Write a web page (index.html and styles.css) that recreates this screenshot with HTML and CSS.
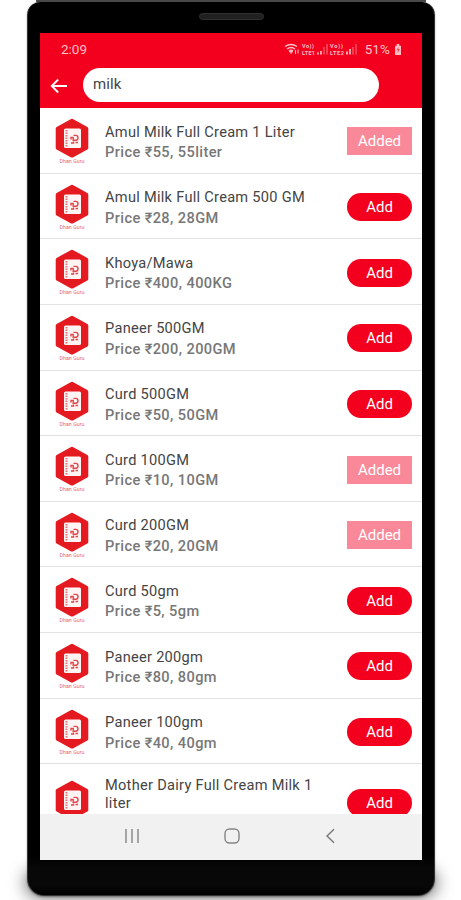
FILE: index.html
```html
<!DOCTYPE html>
<html lang="en">
<head>
<meta charset="utf-8">
<title>Product search</title>
<link rel="stylesheet" href="styles.css">
</head>
<body>
<svg class="defs" aria-hidden="true">
  <symbol id="logo" viewBox="0 0 36 50">
    <path d="M18 2.5 32.5 10.5V30L18 37.8 3.5 30V10.5Z" fill="#e41a20" stroke="#e41a20" stroke-width="3.6" stroke-linejoin="round"/>
    <rect x="10" y="10.5" width="17" height="19.5" rx="1.5" fill="#fff4f4"/>
    <path d="M12.5 12V29" stroke="#e87579" stroke-width="2" stroke-dasharray="1.5 1"/>
    <path d="M17 21.5v-2h2.2v2.7H22q2 0 2-2.4t-2.2-2.4H19.5M17 25h2.5v-1.5M21.5 24.5h2.5" fill="none" stroke="#e2464b" stroke-width="1.4"/>
    <text x="18" y="45.3" text-anchor="middle" font-size="5.3" textLength="25" fill="#e9666b">Dhan Guru</text>
  </symbol>
</svg>
<div class="phone">
  <div class="speaker"></div>
  <div class="screen">
    <header class="header">
      <div class="status">
        <span class="time">2:09</span>
        <svg class="signals" width="75" height="16" viewBox="0 0 75 16" fill="none" stroke="#ffc0c5">
          <path d="M1 5.5Q7 1.5 13 5.5M3 8Q7 5 11 8M5 10.3Q7 8.5 9 10.3" stroke-width="1.5"/>
          <path d="M7 12.5 5.5 10.5h3ZM11.5 9v4M14 8.5v4" stroke-width="1"/>
          <g fill="#ffc0c5" stroke="none" font-size="5.5" font-weight="700">
            <text x="18" y="7" textLength="12">Vo))</text><text x="18" y="13.6" textLength="13">LTE1</text>
            <text x="46" y="7" textLength="13">Vo))</text><text x="46" y="13.6" textLength="14">LTE2</text>
          </g>
          <path d="M34 13.5v-2M37 13.5V10M63 13.5v-3M66 13.5V8" stroke-width="1.7"/>
          <path d="M40 13.5V6M43 13.5V3M69 13.5V6M72 13.5V3" stroke="#f96873" stroke-width="1.2"/>
        </svg>
        <span class="battery">51%</span>
        <svg class="cell" width="8" height="11" viewBox="0 0 9 13"><path d="M3 0h3v2h2v11H1V2h2Z" fill="#ffc0c5"/><path d="M5 3.5 2.5 7.5h2L4 11l3-5H5Z" fill="#e85560"/></svg>
      </div>
      <div class="searchbar">
        <svg class="back" width="18" height="16" viewBox="0 0 18 16" fill="none" stroke="#fff" stroke-width="1.8"><path d="M17 8H2M8.2 1.5 1.7 8l6.5 6.5"/></svg>
        <div class="field">milk</div>
      </div>
    </header>
    <main class="list">
      <div class="row"><svg class="logo"><use href="#logo"/></svg><div class="info"><div class="name">Amul Milk Full Cream 1 Liter</div><div class="price">Price ₹55, 55liter</div></div><div class="btn added">Added</div></div>
      <div class="row"><svg class="logo"><use href="#logo"/></svg><div class="info"><div class="name">Amul Milk Full Cream 500 GM</div><div class="price">Price ₹28, 28GM</div></div><div class="btn">Add</div></div>
      <div class="row"><svg class="logo"><use href="#logo"/></svg><div class="info"><div class="name">Khoya/Mawa</div><div class="price">Price ₹400, 400KG</div></div><div class="btn">Add</div></div>
      <div class="row"><svg class="logo"><use href="#logo"/></svg><div class="info"><div class="name">Paneer 500GM</div><div class="price">Price ₹200, 200GM</div></div><div class="btn">Add</div></div>
      <div class="row"><svg class="logo"><use href="#logo"/></svg><div class="info"><div class="name">Curd 500GM</div><div class="price">Price ₹50, 50GM</div></div><div class="btn">Add</div></div>
      <div class="row"><svg class="logo"><use href="#logo"/></svg><div class="info"><div class="name">Curd 100GM</div><div class="price">Price ₹10, 10GM</div></div><div class="btn added">Added</div></div>
      <div class="row"><svg class="logo"><use href="#logo"/></svg><div class="info"><div class="name">Curd 200GM</div><div class="price">Price ₹20, 20GM</div></div><div class="btn added">Added</div></div>
      <div class="row"><svg class="logo"><use href="#logo"/></svg><div class="info"><div class="name">Curd 50gm</div><div class="price">Price ₹5, 5gm</div></div><div class="btn">Add</div></div>
      <div class="row"><svg class="logo"><use href="#logo"/></svg><div class="info"><div class="name">Paneer 200gm</div><div class="price">Price ₹80, 80gm</div></div><div class="btn">Add</div></div>
      <div class="row"><svg class="logo"><use href="#logo"/></svg><div class="info"><div class="name">Paneer 100gm</div><div class="price">Price ₹40, 40gm</div></div><div class="btn">Add</div></div>
      <div class="row tall"><svg class="logo"><use href="#logo"/></svg><div class="info"><div class="name">Mother Dairy Full Cream Milk 1 liter</div></div><div class="btn">Add</div></div>
    </main>
    <nav class="nav">
      <svg width="16" height="16" viewBox="0 0 16 16" stroke="#999" stroke-width="1.7"><path d="M2 1v14M8 1v14M14 1v14"/></svg>
      <svg width="16" height="16" viewBox="0 0 16 16" fill="none" stroke="#858585" stroke-width="1.4"><rect x="1" y="1" width="14" height="14" rx="4.5"/></svg>
      <svg width="16" height="16" viewBox="0 0 16 16" fill="none" stroke="#777" stroke-width="1.4"><path d="M11 1.2 4 8l7 6.8"/></svg>
    </nav>
  </div>
</div>
</body>
</html>
```
FILE: styles.css
```css
* { box-sizing: border-box; }
body { margin: 0; height: 900px; overflow: hidden; background: #fff; font-family: Roboto, "Noto Sans", sans-serif; }
.defs { position: absolute; width: 0; height: 0; }
.phone {
  position: relative;
  width: 408px; height: 894px; margin: 2px 0 0 27px; padding: 31px 12px 0;
  border: 1px solid #333; border-top: 0; border-radius: 13px 13px 17px 17px;
  background: linear-gradient(#000 95.5%, #080808 97%, #080808 99%, #000);
  box-shadow: 0 1px 2px rgba(0,0,0,.35);
}
.phone::before { content: ""; position: absolute; left: 8px; right: 8px; top: -2px; height: 2px; background: #484848; }
.phone::after {
  content: ""; position: absolute; z-index: -1; left: 4px; right: 4px; bottom: 5px; height: 14px;
  border-radius: 12px; box-shadow: 0 0 18px 5px rgba(0,0,0,.75);
}
.speaker { position: absolute; left: 171px; top: 11px; width: 65px; height: 7px; border: 1px solid #303030; border-radius: 4px; background: #202020; }
.screen { height: 827px; display: flex; flex-direction: column; background: #fff; overflow: hidden; }
.header { height: 75px; flex: none; background: #f2001d; }
.status { height: 32px; display: flex; align-items: center; padding: 0 20px 0 21px; color: #ffc0c5; font-size: 13.5px; }
.signals { margin-left: auto; }
.battery { margin-left: 6px; letter-spacing: .1px; }
.cell { margin: 1px 0 0 4px; }
.searchbar { display: flex; align-items: center; padding: 3px 43px 0 10px; }
.back { margin: 2px 15px 0 0; }
.field { flex: 1; height: 34px; border-radius: 17px; background: #fff; color: #444; font-size: 15px; line-height: 32px; padding-left: 10px; letter-spacing: .1px; }
.list { height: 706px; flex: none; overflow: hidden; }
.row { height: 65.65px; display: flex; align-items: flex-start; border-bottom: 1px solid #e2e2e2; padding: 0 10px 0 14px; }
.logo { width: 36px; height: 50px; margin: 10px 15px 0 0; flex: none; }
.info { flex: 1; padding-top: 14.5px; white-space: nowrap; }
.name { color: #444; font-size: 14.6px; line-height: 18px; letter-spacing: .28px; }
.price { color: #777; font-size: 14.6px; font-weight: 500; line-height: 18px; margin-top: 2.5px; letter-spacing: .4px; }
.btn { width: 65px; height: 28px; margin-top: 19.3px; border-radius: 14px; background: #f2001d; color: #fff; font-size: 15px; line-height: 29px; text-align: center; flex: none; }
.added { border-radius: 0; background: #f98998; }
.tall { height: 78px; }
.tall .logo { margin-top: 16px; }
.tall .info { padding: 12px 20px 0 0; white-space: normal; }
.tall .btn { margin-top: 25px; }
.nav { flex: 1; background: #f1f1f1; display: flex; align-items: center; justify-content: space-between; padding: 0 83px 2px 84px; }
```
